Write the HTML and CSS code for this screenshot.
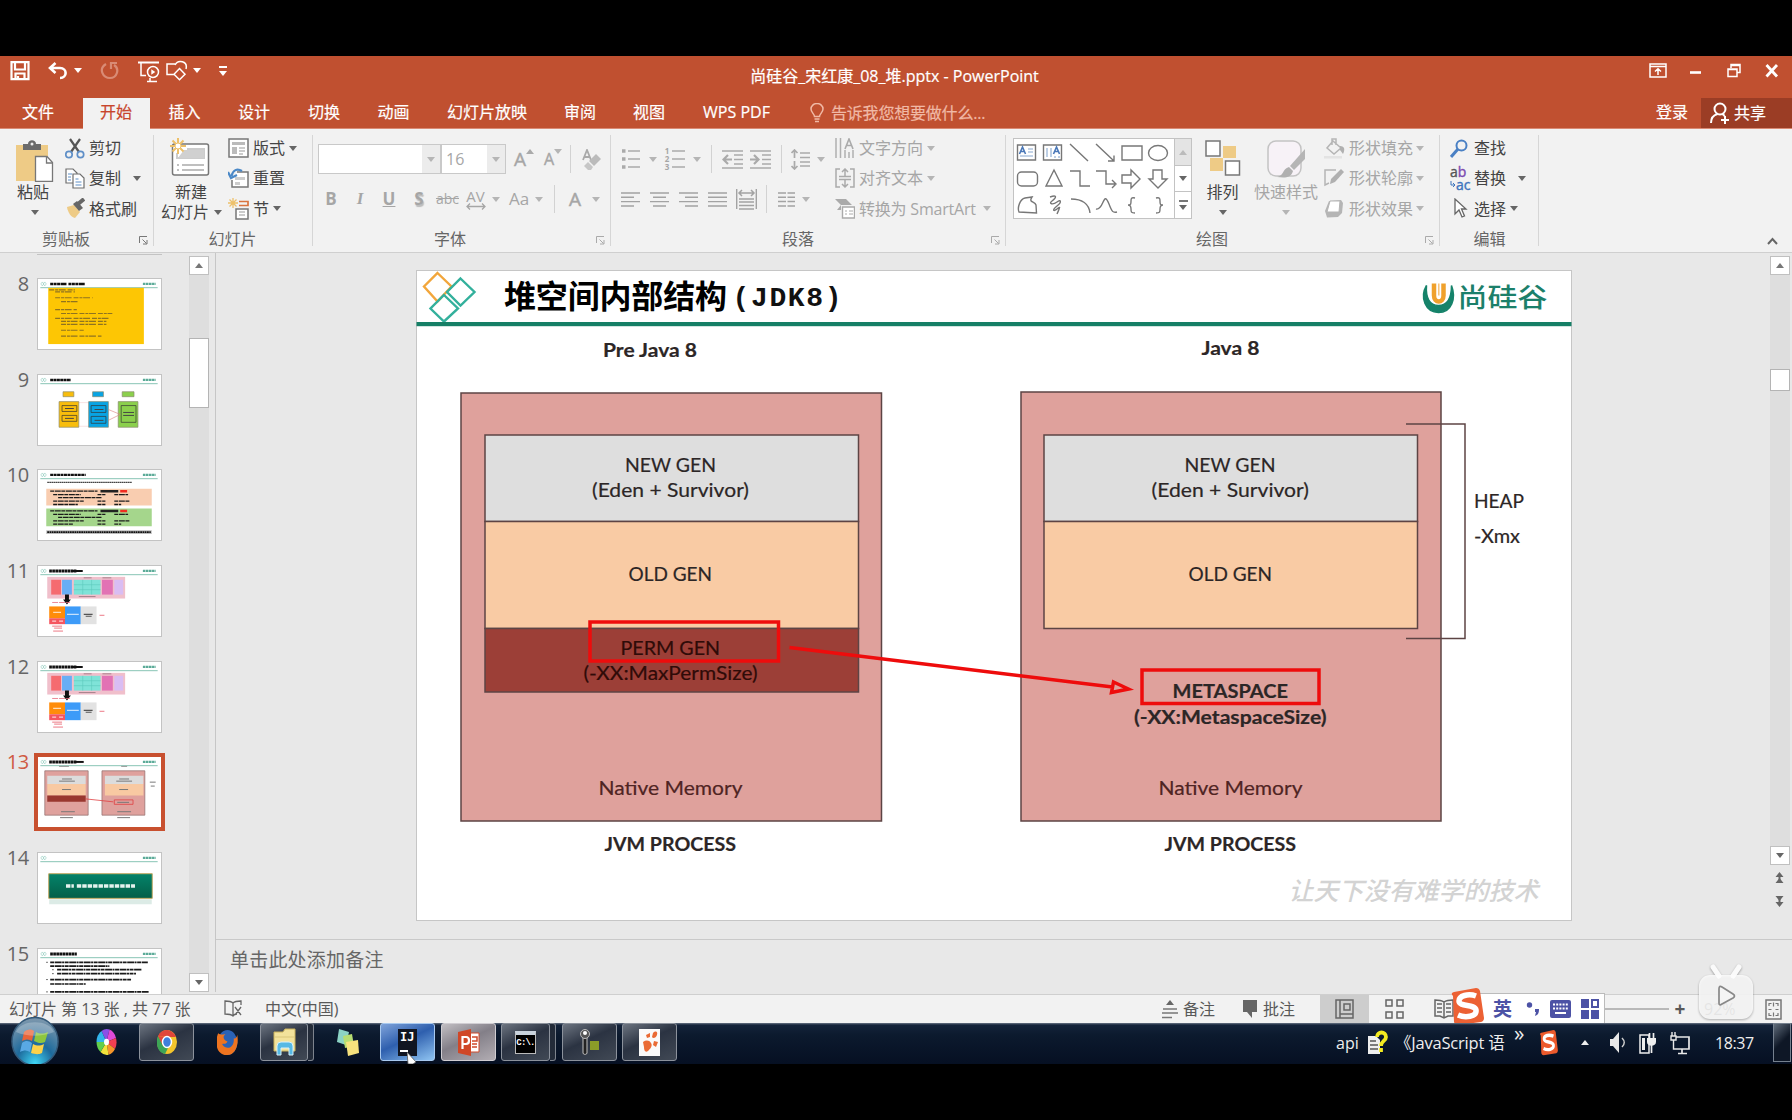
FILE: index.html
```html
<!DOCTYPE html>
<html lang="zh-CN">
<head>
<meta charset="utf-8">
<title>尚硅谷_宋红康_08_堆.pptx - PowerPoint</title>
<link rel="stylesheet" href="styles.css">
</head>
<body>
<svg class="defs" width="0" height="0">
  <symbol id="thumb-head" viewBox="0 0 124 71">
    <path d="M2.500 5l1.500-2 1.500 2-1.500 2zM5 5l1.500-2 1.500 2-1.500 2z" fill="none" stroke="#8cc9bb" stroke-width=".6"/>
    <path d="M2 8.800h119" stroke="#86c3b4" stroke-width="1"/>
    <path d="M106 5h13" stroke="#5bab98" stroke-width="2.400" stroke-dasharray="2.600 .5"/>
  </symbol>
  <symbol id="thumb-heap" viewBox="0 0 124 71">
    <path d="M11 5h28" stroke="#111" stroke-width="3" stroke-dasharray="2.700 .4"/><path d="M35 5h10" stroke="#111" stroke-width="2"/>
    <rect x="9" y="11" width="79" height="22" fill="#f0bfcb"/>
    <rect x="13" y="14" width="10" height="15" fill="#f56b70"/><rect x="24" y="14" width="10" height="15" fill="#68aef5"/>
    <rect x="36" y="14" width="27" height="15" fill="#7fe3d8"/><path d="M36 19h27M36 24h27M45 14v15M54 14v15" stroke="#5cc8bc" stroke-width=".6"/>
    <rect x="64.500" y="14" width="11" height="15" fill="#e272b4"/><rect x="77" y="14" width="9" height="15" fill="#d9bdf3"/>
    <path d="M46 12h8M65 12h9M41 31h17" stroke="#a7808a" stroke-width="1"/>
    <path d="M27 29h4v5h2l-4 5-4-5h2z" fill="#111"/><path d="M14 37h18" stroke="#e5697b" stroke-width=".8" stroke-dasharray="6 1"/>
    <rect x="11" y="41" width="16" height="12" fill="#ff8c0a"/><rect x="11" y="53" width="16" height="6" fill="#f5555f"/>
    <rect x="27" y="41" width="16" height="18" fill="#3d9bf8"/><rect x="43" y="41" width="16" height="18" fill="#e2e2e2"/>
    <path d="M15 47h8M14 56h4M21 56h4M29 49h12" stroke="#ffffff" stroke-width="1.200" opacity=".7"/><path d="M46 49h9M48 51h6" stroke="#555" stroke-width="1.200"/>
    <path d="M62 50h5M14 61h10M16 63h8M15 66h10" stroke="#ec7884" stroke-width="1"/>
  </symbol>
  <symbol id="launcher" viewBox="0 0 9 9"><path d="M.5 7V.5H8M3.500 3.500l4 4M8 4v4H4" fill="none" stroke="currentColor"/></symbol>
</svg>

<div class="screen">
<header class="titlebar">
  <div class="qat">
    <svg width="20" height="20" viewBox="0 0 20 20" fill="none" stroke="#fff" stroke-width="2.200"><path d="M1.500 1.200h17v17h-17zM5 1v7.500h10V1M5.500 18.500v-6h9v6M8 18v-3"/></svg>
    <svg class="q-undo" width="20" height="18" viewBox="0 0 20 18" fill="none" stroke="#fff" stroke-width="2.600"><path d="M7.500 1L2 6l5.500 5M2.500 6H12c7.500 0 7.500 10 0 10"/></svg>
    <i class="caret light q-c1"></i>
    <svg class="q-redo" width="19" height="19" viewBox="0 0 19 19" fill="none" stroke="#d98b75" stroke-width="2.200"><path d="M6 3c-8 5-3 14 4 14s10-9 4-13M11 8V2h6"/></svg>
    <svg class="q-show" width="22" height="22" viewBox="0 0 22 22" fill="none" stroke="#fff" stroke-width="1.500"><path d="M0 1.500h21" stroke-width="2"/><path d="M3 2v12.500h5M9 20.500h10M12 17v3"/><circle cx="15" cy="11" r="5.500"/><path d="M13.300 8.300l4 2.700-4 2.700z" fill="#fff" stroke="none"/></svg>
    <svg class="q-shape" width="23" height="21" viewBox="0 0 23 21" fill="none" stroke="#fff" stroke-width="1.500"><path d="M8 14.500H1V4h8M9 5c3-6 13-4 11 4M13.500 8.500l5.500 5.700-5.500 5.600L8 14.200z"/></svg>
    <i class="caret light q-c2"></i>
    <span class="q-custom"><i class="caret light"></i></span>
  </div>
  <div class="doc-title">尚硅谷_宋红康_08_堆.pptx - PowerPoint</div>
  <div class="win">
    <svg width="18" height="16" viewBox="0 0 18 16" fill="none" stroke="#fff" stroke-width="1.500"><path d="M1 1h16v13H1zM1 3.500h16M9 12V6M6 8.500L9 5.700l3 2.800"/></svg>
    <svg width="12" height="16" viewBox="0 0 12 16"><path d="M0 9.500h11" stroke="#fff" stroke-width="2.600"/></svg>
    <svg width="14" height="16" viewBox="0 0 14 16" fill="none" stroke="#fff" stroke-width="1.500"><path d="M1 6h9v7.500H1zM1 6.500h9M4 5V1.500h9v8h-3M4 2.500h9" /></svg>
    <svg width="14" height="16" viewBox="0 0 14 16"><path d="M1.500 2l10.500 11.500M12 2L1.500 13.500" stroke="#fff" stroke-width="2.800"/></svg>
  </div>
</header>

<nav class="tabs">
  <span class="t76">文件</span><span class="t67 on">开始</span><span class="t69">插入</span><span class="t70">设计</span><span class="t70">切换</span><span class="t69">动画</span><span class="t118">幻灯片放映</span><span class="t68">审阅</span><span class="t70">视图</span><span class="t106">WPS PDF</span>
  <div class="tell">
    <svg width="14" height="20" viewBox="0 0 14 20" fill="none" stroke="#f0b9a6" stroke-width="1.500"><path d="M4.500 13.500C4.500 11 1 9.500 1 6a6 5.500 0 0 1 12 0c0 3.500-3.500 5-3.500 7.500zM4.500 16h5M5 18.500h4"/></svg>
    告诉我您想要做什么...
  </div>
  <span class="login">登录</span>
  <div class="share">
    <svg width="20" height="22" viewBox="0 0 20 22" fill="none" stroke="#fff" stroke-width="2"><circle cx="10" cy="7" r="5.500"/><path d="M1 21c0-5 3-8 6.500-9M12 12c1.500.5 2 1 2.500 2M15 14v8M11 18h8"/></svg>共享
  </div>
</nav>

<section class="ribbon">
  <div class="group g1">
    <div class="body">
      <div class="big">
        <svg width="38" height="42" viewBox="0 0 38 42"><path d="M0 5h32v36H0z" fill="#eecb86"/><path d="M7 10V4h5c0-5 8-5 8 0h5v6z" fill="#6b6b6b"/><circle cx="16" cy="4" r="1.500" fill="#eee"/><path d="M19.500 16.500H31l5.500 6v19h-17z" fill="#fff" stroke="#777" stroke-width="1.300"/><path d="M30.500 17v6h6" fill="none" stroke="#777" stroke-width="1.300"/></svg>
        <span>粘贴</span><i class="caret"></i>
      </div>
      <div class="rows">
        <div><svg width="20" height="21" viewBox="0 0 20 21" fill="none"><path d="M5 1l9 13M15 1L6 14" stroke="#555" stroke-width="2.200"/><circle cx="4" cy="16.500" r="3.200" stroke="#5f8fc7" stroke-width="1.700"/><circle cx="15.500" cy="16.500" r="3.200" stroke="#5f8fc7" stroke-width="1.700"/></svg>剪切</div>
        <div><svg width="20" height="21" viewBox="0 0 20 21" fill="#fff" stroke="#6e6e6e" stroke-width="1.200"><path d="M1 1h7l4 4v10H1z"/><path d="M8 6h7l4 4v10H8z"/><path d="M3 6h4M3 9h3M3 12h3M10.500 11h3M10.500 14h6M10.500 17h6" stroke="#5f8fc7"/></svg>复制<i class="caret c-copy"></i></div>
        <div><svg width="20" height="21" viewBox="0 0 20 21"><path d="M2 9l7-2 6 7-5 6C6 19 3 15 2 9z" fill="#eecb86"/><path d="M8 6l4-3 6 7-4 3z" fill="#666"/><path d="M13 6l6-5" stroke="#666" stroke-width="4"/></svg>格式刷</div>
      </div>
    </div>
    <div class="label"><span class="l1">剪贴板</span><svg class="la" width="9" height="9"><use href="#launcher"/></svg></div>
  </div>

  <div class="group g2">
    <div class="body">
      <div class="big">
        <svg width="40" height="40" viewBox="0 0 40 40"><rect x="2.500" y="7" width="36" height="31" rx="2" fill="#fff" stroke="#777" stroke-width="1.500"/><path d="M17 12h17v9H7v-5" fill="none" stroke="#ccc" stroke-width="2"/><path d="M14 13h20v8H8z" fill="#d0d0d0"/><path d="M7 28h2M12 28h22M7 33h2M12 33h22" stroke="#aaa" stroke-width="1.500"/><path d="M8 1v16M0 9h16M2.500 3.500l11 11M13.500 3.500l-11 11" stroke="#edc06a" stroke-width="2"/><circle cx="8" cy="9" r="3" fill="#fff" stroke="#edc06a"/></svg>
        <span>新建</span><span class="two">幻灯片<i class="caret"></i></span>
      </div>
      <div class="rows">
        <div><svg width="21" height="20" viewBox="0 0 21 20"><path d="M1 1h19v18H1z" fill="#fff" stroke="#777" stroke-width="1.500"/><path d="M4 4h13v3H4zM4 9h5v7H4z" fill="#bbb"/><path d="M11 10h6M11 13h6M11 16h4" stroke="#999"/></svg>版式<i class="caret"></i></div>
        <div><svg width="21" height="21" viewBox="0 0 21 21"><path d="M9 4h11v15H4v-7" fill="#fff" stroke="#777" stroke-width="1.500"/><path d="M7 9h10v3H7zM7 14h5v3H7z" fill="#ccc"/><path d="M14 3C9 0 5 2 3.500 8M0 4l3 6 6-3" fill="none" stroke="#4a88c7" stroke-width="2.200"/></svg>重置</div>
        <div class="sec"><svg width="21" height="22" viewBox="0 0 21 22"><path d="M5 0v10M0 5h10M1.500 1.500l7 7M8.500 1.500l-7 7" stroke="#edc06a" stroke-width="1.300"/><path d="M11 3.500h9v4h-9" fill="none" stroke="#d9743f" stroke-width="1.700"/><path d="M8 11h12v10H8z" fill="#fff" stroke="#777" stroke-width="1.500"/><path d="M11 14h6M11 17h6" stroke="#999"/></svg>节<i class="caret"></i></div>
      </div>
    </div>
    <div class="label"><span>幻灯片</span></div>
  </div>

  <div class="group g3">
    <div class="body col dis">
      <div class="strip top">
        <span class="combo w123"><b></b><i class="caret"></i></span><span class="combo w65"><b>16</b><i class="caret"></i></span>
        <span class="w36 grow-a">A<i class="up"></i></span><span class="w22 grow-a sm">A<i class="caret"></i></span><span class="w12"><i class="sep"></i></span>
        <span class="w31"><svg width="19" height="21" viewBox="0 0 19 21"><path d="M1 11L5 1l4 10M2.500 8h5" fill="none" stroke="#aaa" stroke-width="1.800"/><path d="M7 12l7-7 5 5-7 7z" fill="#bbb"/><path d="M6 13l5 5-2 3H6l-4-4z" fill="#c6c6c6"/></svg></span>
      </div>
      <div class="strip">
        <span class="w26"><b>B</b></span><span class="w32"><em>I</em></span><span class="w26"><u><b>U</b></u></span><span class="w34 shadow"><b>S</b></span><span class="w23 abc"><s>abc</s></span><span class="w33 av">AV<svg width="20" height="7" viewBox="0 0 20 7" fill="none" stroke="#a6a6a6" stroke-width="1.300"><path d="M1 3.500h18M4 .5l-3 3 3 3M16 .5l3 3-3 3"/></svg></span><span class="w7"><i class="caret"></i></span><span class="w36 aa">Aa</span><span class="w8"><i class="caret"></i></span><span class="w23"><i class="sep"></i></span><span class="w18 fc">A</span><span class="w24"><i class="caret"></i></span>
      </div>
    </div>
    <div class="label"><span class="l3">字体</span><svg class="la dim" width="9" height="9"><use href="#launcher"/></svg></div>
  </div>

  <div class="group g4">
    <div class="body dis">
      <div class="col para">
        <div class="strip top">
          <span class="w39"><svg width="18" height="20" viewBox="0 0 18 20"><path d="M6 2h12M6 10h12M6 18h12" stroke="#aaa" stroke-width="1.500"/><path d="M0 2h3.500M0 10h3.500M0 18h3.500" stroke="#aaa" stroke-width="3.500"/></svg></span><span class="w6"><i class="caret"></i></span>
          <span class="w38 nums"><small>1<br>2<br>3</small><svg width="13" height="20" viewBox="0 0 13 20"><path d="M0 2h13M0 10h13M0 18h13" stroke="#aaa" stroke-width="1.500"/></svg></span><span class="w6"><i class="caret"></i></span><span class="w22"><i class="sep"></i></span>
          <span class="w20"><svg width="21" height="19" viewBox="0 0 21 19"><path d="M0 1h21M12 5h9M12 9.500h9M12 14h9M0 18h21" stroke="#aaa" stroke-width="1.400"/><path d="M10 9.500H2M6 5L1.500 9.500 6 14" fill="none" stroke="#aaa" stroke-width="2.200"/></svg></span>
          <span class="w37"><svg width="21" height="19" viewBox="0 0 21 19"><path d="M0 1h21M12 5h9M12 9.500h9M12 14h9M0 18h21" stroke="#aaa" stroke-width="1.400"/><path d="M0 9.500h8M4 5l4.500 4.500L4 14" fill="none" stroke="#aaa" stroke-width="2.200"/></svg></span><span class="w4"><i class="sep"></i></span>
          <span class="w34"><svg width="19" height="21" viewBox="0 0 19 21"><path d="M9 4h10M9 8.500h10M9 13h10M9 17h10" stroke="#aaa" stroke-width="1.400"/><path d="M3.500 1v8M.5 4l3-3 3 3M3.500 12v8M.5 17l3 3 3-3" fill="none" stroke="#aaa" stroke-width="1.700"/></svg></span><span class="w7"><i class="caret"></i></span>
        </div>
        <div class="strip al">
          <span class="w29"><svg width="19" height="15" viewBox="0 0 19 15"><path d="M0 1h19M0 5.300h13M0 9.600h19M0 14h13" stroke="#a3a3a3" stroke-width="1.400"/></svg></span><span class="w29"><svg width="19" height="15" viewBox="0 0 19 15"><path d="M0 1h19M3 5.300h13M0 9.600h19M3 14h13" stroke="#a3a3a3" stroke-width="1.400"/></svg></span><span class="w29"><svg width="19" height="15" viewBox="0 0 19 15"><path d="M0 1h19M6 5.300h13M0 9.600h19M6 14h13" stroke="#a3a3a3" stroke-width="1.400"/></svg></span><span class="w29"><svg width="19" height="15" viewBox="0 0 19 15"><path d="M0 1h19M0 5.300h19M0 9.600h19M0 14h19" stroke="#a3a3a3" stroke-width="1.400"/></svg></span><span class="w29"><svg width="21" height="21" viewBox="0 0 21 21"><path d="M.7 0v20M20.300 0v20M3 10h15M3 13h15M3 16.500h15M3 20h15" stroke="#a3a3a3" stroke-width="1.400"/><path d="M3 4h15M6 1L3 4l3 3M15 1l3 3-3 3" fill="none" stroke="#a3a3a3" stroke-width="1.500"/></svg></span><span class="w11"><i class="sep"></i></span><span class="w29"><svg width="17" height="15" viewBox="0 0 17 15"><path d="M0 1h8M9.500 1H17M0 5.300h8M9.500 5.300H17M0 9.600h8M9.500 9.600H17M0 14h8M9.500 14H17" stroke="#a3a3a3" stroke-width="1.500"/></svg></span><span class="w10"><i class="caret"></i></span>
        </div>
      </div>
      <div class="rows">
        <div><svg width="20" height="20" viewBox="0 0 20 20"><path d="M1 0v20M5.500 0v20M10 12v8M14 14v6M18 12v8" stroke="#b0b0b0" stroke-width="1.500"/><path d="M10 11l4-10 4 10M11 7.500h6" fill="none" stroke="#aaa" stroke-width="1.600"/></svg>文字方向<i class="caret"></i></div>
        <div><svg width="20" height="20" viewBox="0 0 20 20" fill="none" stroke="#aaa" stroke-width="1.500"><path d="M5 1H1v18h4M15 1h4v18h-4M4 8.500h12M4 11.500h12M10 8V1M7 4l3-3 3 3M10 12v7M7 16l3 3 3-3"/></svg>对齐文本<i class="caret"></i></div>
        <div><svg width="20" height="21" viewBox="0 0 20 21"><path d="M0 1h11l6 6H6v5H2l4-5z" fill="#aaa"/><path d="M7.500 9h12v11h-12z" fill="#fff" stroke="#aaa" stroke-width="1.400"/><path d="M10 13h2M14 13h4M10 16h2M14 16h4" stroke="#aaa"/></svg><span class="smart">转换为 SmartArt</span><i class="caret"></i></div>
      </div>
    </div>
    <div class="label"><span class="l4">段落</span><svg class="la dim" width="9" height="9"><use href="#launcher"/></svg></div>
  </div>

  <div class="group g5">
    <div class="body">
      <div class="gallery">
        <svg width="160" height="80" viewBox="0 0 160 80" fill="none" stroke="#777" stroke-width="1.400">
          <path d="M3.500 6h18v15h-18zM29.500 6h18v15h-18z"/><path d="M14 10h5M14 13h5M6 17h13M33 9v9M37 9v9M41 17v2M45 17v2" stroke="#88a8cf" stroke-width="1.100"/><path d="M5.500 15l3-7 3 7M6.500 12.500h4M39.500 15l3-7 3 7M40.500 12.500h4" stroke="#4a78b8" stroke-width="1.600"/>
          <path d="M56 5l18 17M82 5l18 17M100 16.500V22h-6M108 7h20v14h-20z"/><ellipse cx="144" cy="14" rx="9.500" ry="7.500"/>
          <rect x="3.500" y="33" width="20" height="14" rx="4"/><path d="M40 31l8 16H32zM56 32h10v15h10M82 32h10v13h9M98 41l4 4-4 4M108 36h9v-5l9 9-9 9v-5h-9zM139 31h9v9h5l-9 9-9-9h4z"/>
          <path d="M5 73c-2-4 1-13 6-14l7-1c-4 6 3 4 4 8l.500 8zM36 58c8-3 6 1 2 4s1 4 5 1 5 0 0 4-4 6 0 3 3-2 0 5M57 60c11 0 18 5 19 14M82 70c8 2 7-20 13-5 3 8 4 9 8 8M121 59c-4-1-4 1-4 3 0 3 0 4-3 4 3 0 3 2 3 4 0 3 0 4 4 4M142 59c4-1 4 1 4 3 0 3 0 4 3 4-3 0-3 2-3 4 0 3 0 4-4 4"/>
        </svg>
        <div class="gbtn"><span class="off"><i class="up"></i></span><span><i class="caret"></i></span><span class="more-btn"><i class="caret"></i></span></div>
      </div>
      <div class="big w61">
        <svg width="36" height="36" viewBox="0 0 36 36"><path d="M18 6h13v12h-5V18H18zM5 18h13v13H5z" fill="#eecb86"/><path d="M18 6h13v12H18z" fill="#eecb86"/><path d="M1 1h14v15H1zM20.500 21h14v14h-14z" fill="#fff" stroke="#777" stroke-width="1.500"/></svg>
        <span>排列</span><i class="caret"></i>
      </div>
      <div class="big w66 dis">
        <svg width="38" height="40" viewBox="0 0 38 40"><rect x="1" y="1" width="33" height="35" rx="8" fill="#f7f2f7" stroke="#c3c3c3" stroke-width="1.500"/><path d="M38 9v10l-11 11-4-4z" fill="#b5b5b5"/><path d="M22 27l4 4c-2 7-8 7-16 6 7-1 5-8 12-10z" fill="#b0b0b0"/></svg>
        <span>快速样式</span><i class="caret"></i>
      </div>
      <div class="rows dis">
        <div><svg width="21" height="21" viewBox="0 0 21 21"><path d="M9 3l8 7-7 6-7-6zM8 7V1h4v6" fill="none" stroke="#b5b5b5" stroke-width="1.500"/><path d="M16 8c5 0 5 4 3 8l-3-4z" fill="#b0b0b0"/><path d="M0 18h18v2.500H0z" fill="#e3e3e3"/></svg>形状填充<i class="caret"></i></div>
        <div><svg width="21" height="21" viewBox="0 0 21 21"><path d="M12 2H1v15l4-2" fill="none" stroke="#b5b5b5" stroke-width="1.500"/><path d="M17 1l3 3-9 10-5 2 1-5z" fill="#b0b0b0"/></svg>形状轮廓<i class="caret"></i></div>
        <div><svg width="21" height="21" viewBox="0 0 21 21"><path d="M1 13l4-10 12-1 2 3-1 10-4 4-11 .500z" fill="#b5b5b5"/><path d="M6 3h10l-1 11H3z" fill="#fff" stroke="#b5b5b5"/></svg>形状效果<i class="caret"></i></div>
      </div>
    </div>
    <div class="label"><span class="l5">绘图</span><svg class="la dim" width="9" height="9"><use href="#launcher"/></svg></div>
  </div>

  <div class="group g6">
    <div class="body">
      <div class="rows">
        <div><svg width="19" height="19" viewBox="0 0 19 19" fill="none" stroke="#4a80c4"><circle cx="11.500" cy="6.500" r="5" stroke-width="2"/><path d="M8 10l-7 8" stroke-width="3"/></svg>查找</div>
        <div><span class="rep"><b>a<i>b</i></b><b class="ac"><svg width="6" height="7" viewBox="0 0 6 7"><path d="M1 0v4h4M3 2l2 2-2 2" fill="none" stroke="#3f74bd"/></svg><em>ac</em></b></span>替换<i class="caret c-rep"></i></div>
        <div><svg width="19" height="21" viewBox="0 0 19 21"><path d="M5 1v15l4-4 3 7 2.500-1-3-7H16z" fill="#fff" stroke="#666" stroke-width="1.300"/></svg>选择<i class="caret"></i></div>
      </div>
    </div>
    <div class="label"><span>编辑</span></div>
  </div>
  <svg class="collapse" width="11" height="8" viewBox="0 0 11 8"><path d="M1 7l4.500-5L10 7" fill="none" stroke="#666" stroke-width="2"/></svg>
</section>

<main class="work">
  <aside class="panel">
    <div class="list">
      <i class="prev"></i>
      <div class="item"><span>8</span><svg class="th" viewBox="0 0 124 71"><use href="#thumb-head"/><path d="M12 5h37" stroke="#111" stroke-width="2.600" stroke-dasharray="3 .5 3 .5 3 .5 6 2"/><rect x="10" y="9" width="97" height="57" fill="#fdc604"/><path d="M11 11h26M17 13h20M17 19h38M23 23h17M17 31h22M23 35h52M17 40h55M23 43h46M23 46h46M23 52h23M23 58h41" stroke="#8f7320" stroke-width="1.200" stroke-dasharray="5 1 3 .7 7 2"/></svg></div>
      <div class="item"><span>9</span><svg class="th" viewBox="0 0 124 71"><use href="#thumb-head"/><path d="M12 5h21" stroke="#111" stroke-width="2.600" stroke-dasharray="3 .4"/><path d="M31 28h88M31 52h50" stroke="#f3d0d0" stroke-width=".6" stroke-dasharray="20 30"/><g stroke="#8a8a70" stroke-width=".7"><path d="M25 17h11v5H25zM21 27h20v26H21z" fill="#f8bd0c"/><path d="M55 17h11v5H55zM51 27h20v26H51z" fill="#08a4e4"/><path d="M85 17h12v5H85zM81 27h20v26H81z" fill="#8bd04c"/><path d="M24 31h15v6H24zM24 41h15v6H24zM53.500 31h15v7h-15zM53.500 42h15v7h-15zM84 31h15v17H84z" fill="none" stroke="#333"/></g><path d="M27 34h9M27 44h9M57 35h9M57 46h9M86 38h11M86 41h11" stroke="#444" stroke-width="1"/><path d="M71 35l12 5-12 6" fill="none" stroke="#d97c7c" stroke-width=".6"/></svg></div>
      <div class="item"><span>10</span><svg class="th" viewBox="0 0 124 71"><use href="#thumb-head"/><path d="M12 5h36" stroke="#111" stroke-width="2.400" stroke-dasharray="3 .5"/><path d="M9 12.500h86" stroke="#444" stroke-width="1.300" stroke-dasharray="1.700 .4"/><path d="M8 19h107v17H8z" fill="#f9cdb0"/><path d="M8 39h107v18H8z" fill="#a5d68c"/><path d="M12 21.500h48M15 25h28M20 28h44M15 31.500h31M15 35h25M12 41.500h48M15 45h28M20 48h44M15 51.500h31M15 55h20M60 25h8M60 31.500h8M60 35h8M77 25h14M77 31.500h16M77 35h7M60 45h8M60 51.500h8M60 55h8M77 45h14M77 51.500h16M77 55h7" stroke="#1b1b1b" stroke-width="1.300" stroke-dasharray="4 .7 6 .6"/><path d="M63 21.500h18M63 41.500h18" stroke="#222" stroke-width="2.500"/><path d="M83 21.500h7M83 41.500h7" stroke="#f02b20" stroke-width="2.500"/><path d="M8 63h107" stroke="#bbb" stroke-width="4"/><path d="M9 63h105" stroke="#111" stroke-width="2" stroke-dasharray="1.800 .5"/></svg></div>
      <div class="item"><span>11</span><svg class="th" viewBox="0 0 124 71"><use href="#thumb-head"/><use href="#thumb-heap"/></svg></div>
      <div class="item"><span>12</span><svg class="th" viewBox="0 0 124 71"><use href="#thumb-head"/><use href="#thumb-heap"/></svg></div>
      <div class="item sel"><span>13</span><svg class="th" viewBox="0 0 124 71"><use href="#thumb-head"/><path d="M11 5h28" stroke="#111" stroke-width="3" stroke-dasharray="2.700 .4"/><path d="M36 5h10" stroke="#111" stroke-width="2"/><path d="M21 9.500h10M84 9.500h6" stroke="#888" stroke-width=".9"/><path d="M6.500 14h44v45h-44zM64.500 14h43.500v45H64.500z" fill="#dfa19d" stroke="#8c6a6a" stroke-width=".7"/><path d="M9 19h39v8.500H9zM67.500 19h39v8.500h-39z" fill="#dcdcdc"/><path d="M9 27.500h39V39H9zM67.500 27.500h39V39h-39z" fill="#f8c9a2"/><path d="M9 39h39v6.500H9z" fill="#99372f"/><path d="M24 22.300h10M21 24.500h16M82 22.300h10M79 24.500h16M24 33h9M82 33h9M23 55.500h14M80 55.500h14M22 61.500h13M80 61.500h13M80 46h12M113 25.500h6M114 29.500h4" stroke="#777" stroke-width="1"/><path d="M48 42.500l28 3M77 43.500h19v4.500H77z" fill="none" stroke="#df3d40" stroke-width=".8"/></svg></div>
      <div class="item"><span>14</span><svg class="th" viewBox="0 0 124 71"><defs><linearGradient id="gg" x1="0" y1="0" x2="0" y2="1"><stop offset="0" stop-color="#04836a"/><stop offset="1" stop-color="#045f48"/></linearGradient></defs><use href="#thumb-head"/><path d="M11 47h104v5H11z" fill="#dcebe6"/><path d="M10.500 21h105v25h-105z" fill="url(#gg)" stroke="#c2a860" stroke-width="1"/><path d="M28 33.500h8M39 33.500h59" stroke="#e4f2ee" stroke-width="3.600" stroke-dasharray="4.500 1"/></svg></div>
      <div class="item"><span>15</span><svg class="th" viewBox="0 0 124 71"><use href="#thumb-head"/><path d="M12 5h27" stroke="#111" stroke-width="3" stroke-dasharray="2.700 .4"/><path d="M12 13.500h99M12 17.300h60M19 21h86M19 25h80M12 31h82M12 35.500h36M12 43.500h100" stroke="#1a1a1a" stroke-width="1.700" stroke-dasharray="4 .6 7 .5 2 .6"/><path d="M8 13.500h1.500M14 21h1.500M14 25h1.500M8 31h1.500M8 43.500h1.500" stroke="#444"/></svg></div>
    </div>
    <div class="scroll s1"><span class="sb"><i class="up"></i></span><span class="knob"></span><span class="sb last"><i class="caret"></i></span></div>
  </aside>

  <div class="stage">
    <div class="canvas">
      <svg class="slide" width="1156" height="651" viewBox="416.500 270.500 1156 651">
        <rect x="417" y="271" width="1155" height="650" fill="#fff" stroke="#c6c6c6"/>
        <g fill="none" stroke-width="2.400"><path d="M438 273.500l14 13.500-14 15-13.500-15z" stroke="#f2a63b"/><path d="M461 279l14 13.500-14 13.500-13.500-13.500z" stroke="#33b09c"/><path d="M444.500 295.500l14 13.500-14 13-13.500-13z" stroke="#33b09c"/></g>
        <rect x="417" y="322.500" width="1155" height="4.200" fill="#167f66"/>
        <text class="cjk-b" x="504.500" y="308.500" textLength="223" font-size="32">堆空间内部结构</text>
        <text class="mono-b" x="733" y="306.500" font-size="28" textLength="109">(JDK8)</text>
        <path d="M1427 286c-7 12-1 27 12 27s18-14 13-27c0 13-4 20-13 20s-13-8-12-20z" fill="#16836a" stroke="#16836a" stroke-width="1.500"/>
        <path d="M1434.500 284v12c0 8 9.500 8 9.500 0v-12" fill="none" stroke="#f0a12c" stroke-width="4.500"/><path d="M1439.300 284v12" stroke="#f7c377" stroke-width="1.500"/>
        <text class="brush" x="1458" y="307.500" font-size="26" textLength="90" lengthAdjust="spacingAndGlyphs" fill="#1c806a">尚硅谷</text>
        <g class="shape">
          <path d="M461.500 393.500H882V821.500H461.500z" fill="#dfa19c"/><path d="M1021.500 392.500H1441.500V821.500H1021.500z" fill="#dfa19c"/>
          <path d="M485.500 435.500H859V522H485.500zM1044.500 435.500H1418V522H1044.500z" fill="#dedede"/>
          <path d="M485.500 522H859V629H485.500zM1044.500 522H1418V629H1044.500z" fill="#f9cba4"/>
          <path d="M485.500 629H859V692.500H485.500z" fill="#9c3f37"/>
          <path d="M1406.500 424.500H1465.500V639H1406.500" fill="none"/>
        </g>
        <g class="lato" transform="translate(0 1)">
          <text class="bd" x="603.500" y="356.500" textLength="94" lengthAdjust="spacingAndGlyphs">Pre Java 8</text>
          <text class="bd" x="1202" y="354.500" textLength="58" lengthAdjust="spacingAndGlyphs">Java 8</text>
          <text x="625.500" y="471.700" textLength="91" lengthAdjust="spacingAndGlyphs">NEW GEN</text>
          <text x="592.500" y="496.500" textLength="157" lengthAdjust="spacingAndGlyphs">(Eden + Survivor)</text>
          <text x="629" y="580.500" textLength="83.500" lengthAdjust="spacingAndGlyphs">OLD GEN</text>
          <text x="621" y="654" textLength="99.500" lengthAdjust="spacingAndGlyphs" class="dark">PERM GEN</text>
          <text x="584" y="679.500" textLength="174" lengthAdjust="spacingAndGlyphs" class="dark">(-XX:MaxPermSize)</text>
          <text x="599" y="794.500" textLength="144" lengthAdjust="spacingAndGlyphs" class="wine">Native Memory</text>
          <text class="bd" x="605" y="850.500" textLength="131.500" lengthAdjust="spacingAndGlyphs">JVM PROCESS</text>
          <text x="1185" y="471.700" textLength="91" lengthAdjust="spacingAndGlyphs">NEW GEN</text>
          <text x="1152" y="496.500" textLength="157.500" lengthAdjust="spacingAndGlyphs">(Eden + Survivor)</text>
          <text x="1189" y="580.500" textLength="83.500" lengthAdjust="spacingAndGlyphs">OLD GEN</text>
          <text class="bd" x="1173" y="697.500" textLength="115.500" lengthAdjust="spacingAndGlyphs">METASPACE</text>
          <text class="bd" x="1134.500" y="723.500" textLength="192.500" lengthAdjust="spacingAndGlyphs">(-XX:MetaspaceSize)</text>
          <text x="1159" y="794.500" textLength="144" lengthAdjust="spacingAndGlyphs" class="wine">Native Memory</text>
          <text class="bd" x="1165" y="850.500" textLength="131.500" lengthAdjust="spacingAndGlyphs">JVM PROCESS</text>
          <text x="1474.500" y="507" textLength="50" lengthAdjust="spacingAndGlyphs">HEAP</text>
          <text x="1474.500" y="542.500" textLength="46" lengthAdjust="spacingAndGlyphs">-Xmx</text>
        </g>
        <g fill="none" stroke="#ee0c0c" stroke-width="3.500"><path d="M590.500 622.500H779V661.500H590.500zM1142.500 670.500H1319.500V704H1142.500zM790 648L1113 687.500M1114 682.500l15 7-17 3.500z"/></g>
        <text class="brush" x="1289" y="900" font-size="25" textLength="250" fill="#d3d3d3" font-style="italic">让天下没有难学的技术</text>
      </svg>
      <div class="scroll s2"><span class="sb"><i class="up"></i></span><span class="knob"></span><span class="sb last"><i class="caret"></i></span><svg width="11" height="46" viewBox="0 0 11 46" fill="#666"><path d="M5.500 4l4 5h-8zM5.500 10l4 5h-8zM1.500 28h8l-4 5zM1.500 34h8l-4 5z"/><path d="M5.500 8v7M5.500 28v8" stroke="#666" stroke-width="2"/></svg></div>
    </div>
    <div class="notes">单击此处添加备注</div>
  </div>
</main>

<footer class="status">
  <span class="s-count">幻灯片 第 13 张 , 共 77 张</span>
  <svg class="s-book" width="20" height="18" viewBox="0 0 20 18" fill="none" stroke="#666" stroke-width="1.300"><path d="M9 3C7 1 4 1 1 1v13c3 0 6 0 8 2 1-2 3-2 4-2M9 16V3c2-2 4-2 8-2v4M11 7l6 8M17 7l-6 8"/></svg>
  <span class="s-lang">中文(中国)</span>
  <svg class="s-n" width="16" height="19" viewBox="0 0 16 19"><path d="M8 0l4 5H4z" fill="#666"/><path d="M1 9h14M0 13h16M0 17.500h10" stroke="#777" stroke-width="1.500"/></svg><span class="s-t">备注</span>
  <svg class="s-m" width="16" height="18" viewBox="0 0 16 18"><path d="M1 0h14v12h-5v6l-5-6H1z" fill="#666"/></svg><span class="s-t2">批注</span>
  <span class="view on"><svg width="19" height="20" viewBox="0 0 19 20" fill="none" stroke="#666" stroke-width="1.500"><path d="M1 1h17v18H1zM5 1v18M9 5h6v6H9zM5 15h13"/></svg></span>
  <svg class="s-g" width="19" height="20" viewBox="0 0 19 20" fill="none" stroke="#666" stroke-width="1.500"><path d="M1 1h6v6H1zM12 1h6v6h-6zM1 13h6v6H1zM12 13h6v6h-6z"/></svg>
  <svg class="s-b" width="20" height="20" viewBox="0 0 20 20" fill="none" stroke="#666" stroke-width="1.500"><path d="M10 3C7 1 4 1 1 1v16h5l4 2 4-2h5V1c-3 0-6 0-9 2v15M3 5h5M3 9h5M3 13h5M12 5h5M12 9h5M12 13h5"/></svg>
  <div class="ime">
    <span>英</span>
    <svg width="14" height="16" viewBox="0 0 14 16" fill="#4c52a5"><circle cx="3.500" cy="4" r="2.700"/><path d="M9 8h4c0 4-1 6-4 7l1-4H9z"/></svg>
    <svg width="21" height="18" viewBox="0 0 21 18"><rect width="21" height="18" rx="2" fill="#4c52a5"/><path d="M3 4.500h15M3 8.500h15" stroke="#fff" stroke-width="2" stroke-dasharray="2 1.200"/><path d="M5 13h11" stroke="#fff" stroke-width="2"/></svg>
    <svg width="18" height="20" viewBox="0 0 18 20" fill="#4c52a5"><path d="M0 0h8v9H0zM0 11h8v9H0zM10 11h8v9h-8z"/><path d="M11 1h6v7h-6z" fill="none" stroke="#4c52a5" stroke-width="2"/></svg>
    <svg class="sogou" width="38" height="38" viewBox="0 0 38 38"><path d="M5 8Q2 5 6 4L28 0q3 0 4 3l4 27q0 3-3 4L10 37q-3 0-4-3z" fill="#ec6134"/><path d="M28 8C20 5 11 8 11 13c0 6 16 3 17 9 1 7-11 8-18 5" fill="none" stroke="#fff" stroke-width="5.500"/></svg>
  </div>
  <i class="zline"></i><b class="plus">+</b><span class="pct">92%</span>
  <svg class="fit" width="17" height="21" viewBox="0 0 17 21" fill="none" stroke="#777" stroke-width="1.500"><path d="M1 1h15v19H1z"/><path d="M8.500 3.500v4M8.500 13.500v4M3.500 10.500h3M10.500 10.500h3M4 7V4.500h2.500M13 7V4.500h-2.500M4 14v2.500h2.500M13 14v2.500h-2.500" stroke-width="1.200"/></svg>
  <svg class="tv" width="58" height="58" viewBox="0 0 58 58"><path d="M16 4l6 9M42 4l-6 9" stroke="#fafafa" stroke-width="5" stroke-linecap="round"/><rect x="2" y="12" width="54" height="44" rx="11" fill="#fcfcfc" fill-opacity=".88"/><path d="M22 26v14q0 3 3 1l11-6q3-2 0-4l-11-7q-3-2-3 2z" fill="#f4f4f4" stroke="#888" stroke-width="1.700"/></svg>
</footer>

<div class="taskbar">
  <svg class="orb" width="48" height="47" viewBox="0 0 48 47"><defs><radialGradient id="ob" cx=".5" cy=".95" r=".9"><stop offset="0" stop-color="#3fd6f6"/><stop offset=".45" stop-color="#1d6a9c"/><stop offset="1" stop-color="#7895ac"/></radialGradient></defs><ellipse cx="24" cy="24.500" rx="23" ry="24" fill="url(#ob)" stroke="#345a7a" stroke-width="1.500"/><path d="M13 15c4-3 7-3 10-1l-2 10c-3-2-6-2-10 0z" fill="#e8643a"/><path d="M25 15c4 2 7 2 12 0l-3 10c-4 2-7 1-11-1z" fill="#8dc63f"/><path d="M11 26c4-3 7-2 10 0l-2 9c-3-2-6-2-10 0z" fill="#59a9e4"/><path d="M22 27c4 2 7 2 11 0l-2 9c-4 2-7 1-11 0z" fill="#fbd24a"/><path d="M5 15C10 2 38 2 43 15 30 20 17 20 5 15z" fill="#fff" opacity=".25"/></svg>
  <span class="app a-wheel"><svg width="21" height="28" viewBox="-10.500 -14 21 28"><path d="M0 0L-5-11A10 13 0 0 1 3-12.500z" fill="#8b50e6"/><path d="M0 0L3-12.500A10 13 0 0 1 9.500-4z" fill="#e04ad8"/><path d="M0 0L9.500-4A10 13 0 0 1 8.500 7z" fill="#f23f52"/><path d="M0 0L8.500 7A10 13 0 0 1 2 12.800z" fill="#f6962a"/><path d="M0 0L2 12.800A10 13 0 0 1-6 10z" fill="#f2e33b"/><path d="M0 0L-6 10A10 13 0 0 1-10 0z" fill="#62cf4c"/><path d="M0 0L-10 0A10 13 0 0 1-5-11z" fill="#33b4ea"/><ellipse rx="2.500" ry="3.200" fill="#fff"/></svg></span>
  <span class="app btn a-chrome"><svg width="20" height="26" viewBox="-10 -13 20 26"><ellipse rx="10" ry="12" fill="#f4c52c"/><path d="M-9-6C-5-14 5-14 9-5H0z" fill="#e0463a"/><path d="M-9-6L-3 3l4 3-3 6C-9 11-12 2-9-6z" fill="#3da556"/><path d="M-9-6L-4 4V-2L0-5z" fill="#e0463a"/><ellipse rx="4.500" ry="5.500" fill="#3f7fdc" stroke="#fff" stroke-width="1.500"/></svg></span>
  <span class="app a-ff"><svg width="21" height="27" viewBox="-10 -13 20 26"><ellipse rx="9.500" ry="12" fill="#2b62b5"/><path d="M-9-9c3 2 4 1 7 1-3 2-2 6 2 7-2 4-5 1-5 3 4 6 12 3 11-6 2 1 4-2 3-5 3 11-2 22-10 21-9 0-12-11-8-21z" fill="#ee7420"/></svg></span>
  <span class="app btn a-exp"><svg width="23" height="28" viewBox="0 0 23 28"><path d="M1 4h9l2-3h10v22H1z" fill="#f2e29b" stroke="#c9b15a"/><path d="M1 9h21" stroke="#d9c67a"/><path d="M4 27v-9q0-4 4-4h8q4 0 4 4v9h-4v-7H8v7z" fill="#56b9e4" stroke="#d8f1fb"/></svg></span><i class="stack"></i>
  <span class="app a-notes"><svg width="22" height="29" viewBox="0 0 22 29"><path d="M2 1l10 3-3 13-9-3z" fill="#8cd3c5"/><path d="M6 8l9-2 2 12-9 2z" fill="#b7dd72"/><path d="M9 14l12-2 1 13-11 3z" fill="#f7e27d"/></svg></span>
  <span class="app btn blue a-ij"><span class="ij"><b>IJ</b></span></span>
  <span class="app btn white a-pp"><svg width="22" height="27" viewBox="0 0 22 27"><path d="M11 4h10v19H11z" fill="#fff" stroke="#d04a2b"/><path d="M14 8h5v4h-5M14 15h5M14 18h5" fill="none" stroke="#d04a2b" stroke-width="1.500"/><path d="M0 3l13-3v27L0 24z" fill="#d04727"/><path d="M4.500 20V8h3.500c4 0 4 7 0 7H5" fill="none" stroke="#fff" stroke-width="2.200"/></svg></span>
  <span class="app btn a-cmd"><span class="cmd">C:\.</span></span><i class="stack"></i>
  <span class="app btn a-tool"><svg width="19" height="29" viewBox="0 0 19 29"><path d="M3 9v16q2 3 4 0V9" fill="#222" stroke="#aaa" stroke-width="1.200"/><circle cx="5" cy="6" r="4.500" fill="#555" stroke="#bbb"/><circle cx="5" cy="5" r="2" fill="#fff"/><path d="M10 13h9v9h-9z" fill="#8a9c28"/></svg></span>
  <span class="app btn a-pic"><svg width="21" height="27" viewBox="0 0 21 27"><path d="M0 0h21v27H0z" fill="#fafafa"/><path d="M4 13c3-2 6-2 8 1s-1 6-3 8c-3 2-4-1-4-4zM14 4c3-3 5-1 4 2s-4 4-5 2zM15 12l4 1-2 5-3-2zM7 6l4-2v4l-3 1z" fill="#ea6b35"/></svg></span>
  <svg class="cursor" width="10" height="12" viewBox="0 0 10 12"><path d="M0 0l9 10-3 2H1z" fill="#fff" stroke="#555" stroke-width=".8"/></svg>
  <div class="tray">
    <span class="api">api</span>
    <svg class="help" width="20" height="25" viewBox="0 0 20 25"><path d="M0 6h8l4 4v14H0z" fill="#eee"/><path d="M2 11h6M2 15h8M2 19h8" stroke="#555" stroke-width="1.500"/><path d="M9 7c0-6 9-6 9 0 0 4-5 4-5 9M13 18v4" fill="none" stroke="#f3ea20" stroke-width="3.800"/></svg>
    <span class="js">《JavaScript 语</span><span class="more">»</span>
    <svg class="tsg" width="21" height="26" viewBox="0 0 38 38" preserveAspectRatio="none"><path d="M5 8Q2 5 6 4L28 0q3 0 4 3l4 27q0 3-3 4L10 37q-3 0-4-3z" fill="#ec5a2c"/><path d="M28 9C20 6 11 8 11 13c0 6 16 3 17 9 1 7-11 8-18 5" fill="none" stroke="#fff" stroke-width="5"/></svg>
    <i class="up lite"></i>
    <svg class="vol" width="17" height="23" viewBox="0 0 17 23"><path d="M0 8h3l6-7v21l-6-7H0z" fill="#e8e8e8"/><path d="M12 7c3 3 3 6 0 9" fill="none" stroke="#ccc" stroke-width="1.500"/></svg>
    <svg class="bat" width="18" height="25" viewBox="0 0 18 25"><path d="M3 5h7v18H1V5z" fill="none" stroke="#eee" stroke-width="1.500"/><path d="M3 8h3v12H3z" fill="#eee"/><path d="M8 8h9v4c0 5-9 5-9 0z" fill="#eee"/><path d="M10.500 3v5M14.500 3v5M12.500 15v8" stroke="#eee" stroke-width="1.700"/></svg>
    <svg class="net" width="20" height="24" viewBox="0 0 20 24" fill="none" stroke="#e8e8e8"><path d="M6 6h13v12H6M12 18v4M8 22.500h9" stroke-width="1.700"/><path d="M2 1v4M5 1v4M1 5h5v4H1zM3.500 9v9H6" stroke-width="1.400"/></svg>
    <span class="clock">18:37</span>
    <i class="desk"></i>
  </div>
</div>
</div>
</body>
</html>
```
FILE: styles.css
```css
* { box-sizing: border-box; }
body { margin: 0; background: #000; color: #444; font: 16px/20px "Open Sans", "Noto Sans CJK SC", sans-serif; }
.defs { position: absolute; }
svg { display: block; flex: none; }
i, em { font-style: normal; }
.screen { width: 1792px; height: 1120px; padding-top: 56px; overflow: hidden; display: flex; flex-direction: column; white-space: nowrap; }

.caret { flex: none; width: 0; height: 0; border: 4px solid transparent; border-top: 5px solid #666; border-bottom: 0; display: block; }
.caret.light { border-top-color: #fff; }
.up { flex: none; width: 0; height: 0; border: 4px solid transparent; border-bottom: 5px solid #777; border-top: 0; display: block; }
.dis { color: #a6a6a6; }
.dis .caret { border-top-color: #b5b5b5; }
.sep { width: 1px; height: 28px; background: #d2d2d2; }

/* title bar */
.titlebar { height: 42px; flex: none; background: #c05030; display: grid; grid-template-columns: 1fr auto 1fr; color: #fff; }
.qat { display: flex; height: 29px; align-items: center; padding-left: 10px; }
.q-undo { margin-left: 18px; }
.q-c1 { margin-left: 6px; }
.q-redo { margin-left: 18px; }
.q-show { margin: 2px 0 0 19px; }
.q-shape { margin-left: 6px; }
.q-c2 { margin-left: 4px; }
.q-custom { margin-left: 18px; border-top: 2px solid #fff; padding-top: 3px; }
.doc-title { line-height: 40px; font-size: 16px; margin-left: -3px; -webkit-text-stroke: .2px; }
.win { display: flex; justify-content: flex-end; padding: 7px 13px 0 0; }
.win svg + svg { margin-left: 24px; }
.win svg:nth-child(3) { margin-left: 25px; }
.win svg:nth-child(2) { margin-left: 23px; }

/* tabs */
.tabs { height: 31px; flex: none; background: #c05030; display: flex; color: #fff; line-height: 29px; text-align: center; border-bottom: 1px solid #d98a74; -webkit-text-stroke: .2px; }
.tabs .on { background: #f2f2f2; color: #c8452c; height: 31px; margin-left: 7px; padding-right: 1px; }
.t67 { width: 67px; } .t68 { width: 68px; } .t69 { width: 69px; } .t70 { width: 70px; } .t76 { width: 76px; } .t106 { width: 105px; } .t118 { width: 118px; }
.tell { display: flex; gap: 7px; align-items: center; padding-left: 21px; color: #f0b9a6; letter-spacing: -.2px; }
.login { margin-left: auto; width: 45px; text-align: left; }
.share { width: 91px; background: #9b3d25; display: flex; gap: 4px; align-items: center; padding-left: 9px; }

/* ribbon */
.ribbon { height: 124px; flex: none; background: #f2f2f2; display: flex; border-bottom: 1px solid #cfcfcf; }
.group { height: 123px; display: flex; flex-direction: column; background: linear-gradient(#d6d6d6, #d6d6d6) right 6px / 1px 111px no-repeat; }
.g1 { width: 154px; } .g2 { width: 159px; } .g3 { width: 298px; } .g4 { width: 395px; } .g5 { width: 434px; } .g6 { width: 99px; }
.group .body { height: 98px; display: flex; }
.group .body.col, .col { display: flex; flex-direction: column; }
.label { height: 24px; display: flex; align-items: center; justify-content: center; color: #666; }
.la { margin-left: auto; margin-top: 3px; color: #777; }
.la.dim { color: #aaa; }
.label:has(.la) { justify-content: flex-start; padding-right: 6px; }
.l1 { margin-left: 42px; } .l3 { margin-left: 121px; } .l4 { margin-left: 171px; } .l5 { margin-left: 190px; }
.g2 .label { padding-right: 2px; }
.big { display: grid; grid-template-rows: 42px 20px 20px; justify-items: center; padding-top: 11px; align-content: start; line-height: 20px; }
.big .caret { align-self: center; }
.g1 .big { margin-left: 15px; width: 40px; }
.g1 .big .caret { margin-left: -1px; }
.g1 .big span { margin-left: -4px; }
.g2 .big { margin-left: 7px; width: 61px; justify-items: start; }
.g2 .big svg { margin: -3px 0 0 9px; }
.g2 .big span { margin-left: 14px; }
.g2 .big .two { display: flex; align-items: center; gap: 5px; margin-left: 0; }
.w61 { width: 61px; } .w66 { width: 66px; }
.rows { padding-top: 4px; }
.rows > div { height: 30.300px; display: flex; align-items: center; }
.rows > div > svg { margin-right: 4px; }
.rows .caret { margin-left: 4px; }
.g1 .rows { margin-left: 10px; }
.rows .c-copy { margin-left: 12px; }
.g2 .rows { margin-left: 6px; }
.g5 .rows { margin-left: 5px; }
.g5 .rows .caret { margin-left: 3px; }
.g6 .rows { margin-left: 10px; }
.g6 .rows > div > svg { margin-right: 5px; }
.rows .c-rep { margin-left: 12px; }
.rep { width: 20px; margin-right: 4px; font-size: 14px; color: #555; display: flex; flex-direction: column; }
.rep b { display: flex; align-items: center; height: 13px; line-height: 12px; font-weight: 400; -webkit-text-stroke: .4px; }
.rep i { color: #7c4bb0; } .rep em { color: #3f74bd; }

.strip { display: flex; align-items: center; height: 30px; margin-top: 10px; font-size: 17px; }
.strip.top { margin-top: 15px; }
.strip > span { flex: none; display: flex; align-items: center; justify-content: center; }
.g3 .strip { padding-left: 5px; }
.combo { height: 30px; border: 1.500px solid #c9c9c9; background: #fff; box-shadow: inset -18px 0 #ececec; padding-right: 5px; }
.strip > .combo { justify-content: space-between; }
.combo b { font-weight: 400; padding-left: 4px; font-size: 16px; }
.w123 { width: 123px; } .w65 { width: 65px; }
.w4 { width: 4px; } .w6 { width: 6px; } .w7 { width: 7px; } .w8 { width: 8px; } .w10 { width: 10px; } .w11 { width: 11px; } .w12 { width: 12px; } .w18 { width: 18px; } .w20 { width: 20px; } .w22 { width: 22px; } .w23 { width: 23px; } .w24 { width: 24px; } .w26 { width: 26px; } .w29 { width: 29px; } .w31 { width: 31px; } .w32 { width: 32px; } .w33 { width: 33px; } .w34 { width: 34px; } .w36 { width: 36px; } .w37 { width: 37px; } .w38 { width: 38px; } .w39 { width: 39px; }
.grow-a { font-size: 19px; -webkit-text-stroke: .4px; }
.grow-a.sm { font-size: 16px; }
.grow-a i { align-self: flex-start; }
.grow-a .up { border-bottom-color: #aaa; }
.strip em { font-style: italic; font-family: "Liberation Serif", serif; font-weight: 700; }
.shadow b { text-shadow: 1px 2px 1px #bbb; }
.abc { font-size: 14px; }
.strip > .av { flex-direction: column; font-size: 15px; line-height: 14px; }
.strip > .aa { padding-left: 4px; }
.fc { font-size: 19px; -webkit-text-stroke: .5px; }
.para { width: 224px; }
.al { padding-left: 5px; }
.nums small { font-size: 8px; line-height: 8px; margin-right: 3px; font-weight: 700; }
.smart { width: 120px; letter-spacing: -.2px; }

.gallery { margin: 9px 0 0 7px; width: 179px; height: 81px; border: 1.500px solid #c3c3c3; background: #fff; display: flex; overflow: hidden; }
.gbtn { width: 18px; border-left: 1px solid #c3c3c3; display: grid; grid-template-rows: 27px 26px 26px; }
.gbtn span { display: grid; place-items: center; border-bottom: 1px solid #c3c3c3; }
.gbtn .off { background: #e4e4e4; }
.off .up { border-bottom-color: #bbb; }
.gbtn .more-btn { align-content: center; gap: 3px; border: 0; }
.more-btn::before { content: ""; width: 9px; height: 2px; background: #777; }
.collapse { margin: 108px 0 0 228px; }

/* work area */
.work { height: 741px; flex: none; background: #e8e8e8; display: flex; }
.panel { width: 216px; display: flex; border-right: 1px solid #c6c6c6; height: 739px; }
.list { width: 189px; height: 741px; overflow: hidden; }
.prev { display: block; width: 125px; height: 1px; background: #c3c3c3; margin: 1px 0 23px 37px; }
.item { height: 95.700px; display: grid; grid-template-columns: 29px 125px; gap: 8px; font-size: 20px; line-height: 12px; color: #666; text-align: right; }
.item span { letter-spacing: -.3px; }
.th { width: 125px; height: 72px; background: #fff; border: 1px solid #c3c3c3; }
.sel { color: #cf5a43; }
.sel .th { outline: 4px solid #c8502f; outline-offset: -1.500px; border-color: #fff; }
.scroll { background: #dedede; width: 20px; display: flex; flex-direction: column; }
.sb { height: 19px; background: #fff; border: 1px solid #c0c0c0; display: grid; place-items: center; flex: none; }
.knob { background: #fff; border: 1px solid #b4b4b4; flex: none; }
.s1 { margin-top: 3px; height: 736px; }
.s1 .knob { height: 70px; margin-top: 63px; }
.sb.last { margin-top: auto; }
.stage { flex: 1; display: flex; flex-direction: column; }
.canvas { height: 687px; display: flex; border-bottom: 1px solid #c9c9c9; }
.slide { margin: 17px 198px 0 200px; }
.s2 { margin-top: 3px; height: 609px; width: 20px; }
.s2 .knob { height: 22px; margin-top: 94px; }
.s2 svg { margin: 3px 0 -49px 4px; }
.notes { flex: 1; padding-left: 14px; line-height: 41px; font-size: 19px; letter-spacing: .2px; color: #666; }
.cjk-b { font-family: "Noto Sans CJK SC", sans-serif; font-weight: 700; fill: #000; }
.mono-b { font-family: "Liberation Mono", monospace; font-weight: 700; fill: #111; }
.brush { font-family: "Noto Sans CJK SC", sans-serif; font-weight: 500; }
.lato { font-family: Lato, sans-serif; font-size: 19.500px; fill: #2c2626; stroke: #2c2626; stroke-width: .2px; }
.lato .bd { font-weight: 700; }
.lato .dark { fill: #2f0b08; stroke: #2f0b08; }
.lato .wine { fill: #4f2423; stroke: #4f2423; }
.shape path { stroke: #5d4444; stroke-width: 1.500; }

/* status bar */
.status { height: 29px; flex: none; background: #f2f2f2; border-top: 1px solid #cfcfcf; display: flex; align-items: center; color: #595959; position: relative; }
.s-count { width: 215px; padding-left: 9px; letter-spacing: -.02px; }
.s-book { margin-left: 9px; }
.s-lang { width: 896px; margin-left: 21px; }
.s-n { margin-left: 1px; } .s-t { margin-left: 5px; width: 59px; }
.s-t2 { margin-left: 5px; width: 57px; }
.view.on { width: 49px; height: 28px; background: #cdcdcd; display: grid; place-items: center; }
.s-g { margin-left: 16px; } .s-b { margin-left: 30px; }
.ime { position: absolute; left: 1468px; top: -2px; width: 137px; height: 31px; background: #fff; border: 1px solid #bbb; padding-left: 24px; display: flex; align-items: center; color: #4c52a5; font-weight: 700; font-size: 19px; }
.ime span { width: 33px; }
.ime svg + svg { margin-left: 10px; }
.ime .sogou { position: absolute; left: -31px; top: -6px; }
.zline { width: 65px; height: 2px; background: #b9b9b9; margin-left: 150px; }
.plus { width: 12px; margin-left: 5px; text-align: center; font-size: 19px; }
.pct { width: 61px; margin-left: 18px; }
.tv { position: absolute; left: 1697px; top: -32px; filter: drop-shadow(0 1px 1px #0005); }

/* taskbar */
.taskbar { height: 41px; flex: none; background: linear-gradient(#6a7686 0, #14233a 2px, #0c1a2e 12px, #061023 40px); display: flex; align-items: flex-start; color: #eee; position: relative; }
.orb { margin: -6px 0 0 11px; position: relative; }
.app { height: 38px; display: grid; place-items: center; flex: none; }
.btn { border: 1px solid #8c929c; border-radius: 3px; background: linear-gradient(155deg, #6c7480, #2b3342 45%, #414955); }
.btn.blue { background: linear-gradient(155deg, #7fa3da, #2e5fae 45%, #8fc4f2); border-color: #a8c9ef; }
.btn.white { background: linear-gradient(155deg, #c2bfc3, #837f88 45%, #b2adb3); border-color: #d0cdd2; }
.stack { width: 6px; height: 38px; border: 1px solid #7d838d; border-left: 0; border-radius: 0 3px 3px 0; background: #232b39; flex: none; }
.a-wheel { width: 21px; margin-left: 37px; }
.a-chrome { width: 55px; margin-left: 22px; }
.a-ff { width: 21px; margin-left: 23px; }
.a-exp { width: 48px; margin-left: 22px; }
.a-notes { width: 22px; margin-left: 23px; }
.a-ij { width: 55px; margin-left: 21px; }
.a-pp { width: 55px; margin-left: 6px; }
.a-cmd { width: 49px; margin-left: 5px; }
.a-tool { width: 55px; margin-left: 6px; }
.a-pic { width: 55px; margin-left: 5px; }
.ij { width: 19px; height: 27px; background: #101522; color: #fff; font: 700 12px/15px "DejaVu Sans Mono", monospace; padding: 1px 2px; }
.ij b::after { content: ""; display: block; width: 8px; height: 2px; background: #fff; margin-top: 5px; }
.cmd { width: 21px; height: 23px; background: #000; border: 1px solid #bbb; border-top: 4px solid #c9d3dd; color: #fff; font: 700 9px/17px "Liberation Mono", monospace; text-align: center; letter-spacing: -.8px; }
.cursor { position: absolute; left: 407px; top: 29px; }
.tray { margin-left: auto; display: flex; align-items: center; height: 39px; }
.api { width: 32px; }
.help { margin-right: 11px; }
.js { width: 115px; letter-spacing: -.2px; text-indent: -4px; font-size: 16.500px; }
.more { font-size: 21px; line-height: 16px; width: 29px; margin: -20px -5px 0 0; }
.up.lite { border-bottom-color: #eee; margin: 0 21px 0 22px; }
.vol { margin-right: 12px; }
.bat { margin-right: 13px; }
.net { margin-right: 25px; }
.clock { width: 58px; letter-spacing: -.4px; font-size: 16px; }
.desk { width: 18px; height: 39px; border: 1px solid #75808e; background: linear-gradient(135deg, #606c7b, #0e1726 50%); margin-right: 1px; }
```
